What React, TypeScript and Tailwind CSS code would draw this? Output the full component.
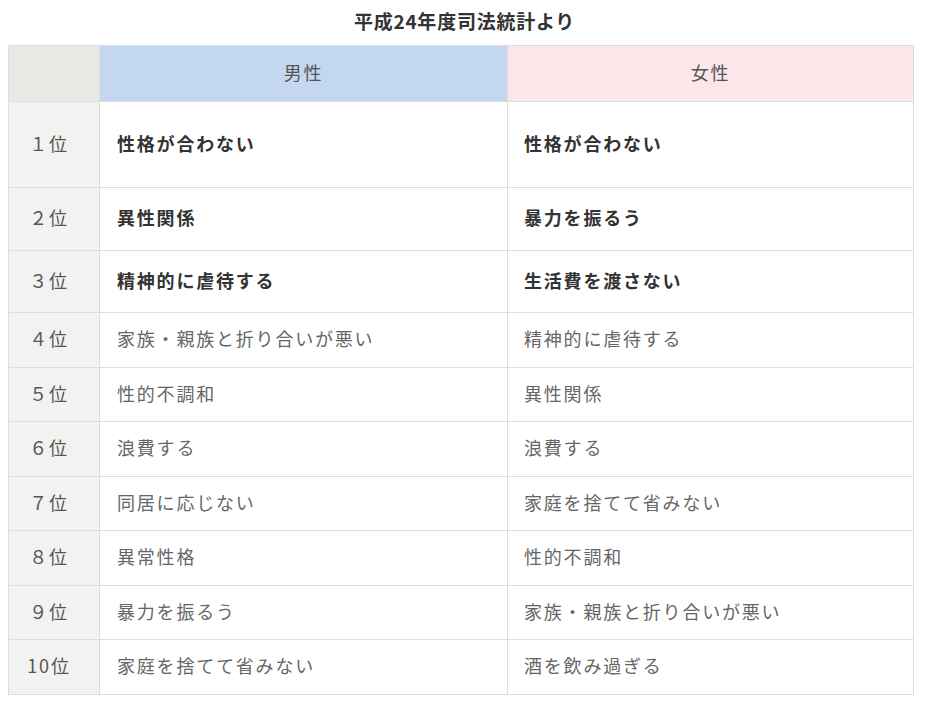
const ROWS: { rank: string; male: string; female: string; strong?: boolean; h: string }[] = [
  { rank: "１位", male: "性格が合わない", female: "性格が合わない", strong: true, h: "h-[86px]" },
  { rank: "２位", male: "異性関係", female: "暴力を振るう", strong: true, h: "h-[63px]" },
  { rank: "３位", male: "精神的に虐待する", female: "生活費を渡さない", strong: true, h: "h-[62px]" },
  { rank: "４位", male: "家族・親族と折り合いが悪い", female: "精神的に虐待する", h: "h-[55px]" },
  { rank: "５位", male: "性的不調和", female: "異性関係", h: "h-[54px]" },
  { rank: "６位", male: "浪費する", female: "浪費する", h: "h-[55px]" },
  { rank: "７位", male: "同居に応じない", female: "家庭を捨てて省みない", h: "h-[54px]" },
  { rank: "８位", male: "異常性格", female: "性的不調和", h: "h-[55px]" },
  { rank: "９位", male: "暴力を振るう", female: "家族・親族と折り合いが悪い", h: "h-[54px]" },
  { rank: "10位", male: "家庭を捨てて省みない", female: "酒を飲み過ぎる", h: "h-[55px]" },
];

export default function App() {
  return (
    <div className="min-h-screen bg-white px-2 pt-2 font-['Noto_Sans_CJK_JP','Noto_Sans',sans-serif] text-[#333]">
      <p className="pb-[11px] text-center text-[19px] leading-[26px] font-bold tracking-[0.04em] text-[#333]">
        平成24年度司法統計より
      </p>
      <table className="w-[906px] table-fixed border-collapse border border-[#ddd] text-[18px] tracking-[0.1em]">
        <colgroup>
          <col className="w-[91px]" />
          <col className="w-[408px]" />
          <col />
        </colgroup>
        <thead>
          <tr className="h-[56px]">
            <th className="border border-[#ddd] bg-[#e9e9e5]" />
            <th className="border border-[#ddd] bg-[#c4d7f0] pb-[3px] text-center font-normal text-[#555]">男性</th>
            <th className="border border-[#ddd] bg-[#fbe6ea] pb-[3px] text-center font-normal text-[#555]">女性</th>
          </tr>
        </thead>
        <tbody>
          {ROWS.map((r) => (
            <tr key={r.rank} className={r.h}>
              <td className="border border-[#ddd] bg-[#f2f2f0] pr-[10px] pb-[3px] text-center text-[#555]">{r.rank}</td>
              <td
                className={`border border-[#ddd] pl-[17px] pb-[3px] ${
                  r.strong ? "font-bold text-[#333]" : "font-normal text-[#666]"
                }`}
              >
                {r.male}
              </td>
              <td
                className={`border border-[#ddd] pl-[16px] pb-[3px] ${
                  r.strong ? "font-bold text-[#333]" : "font-normal text-[#666]"
                }`}
              >
                {r.female}
              </td>
            </tr>
          ))}
        </tbody>
      </table>
    </div>
  );
}
